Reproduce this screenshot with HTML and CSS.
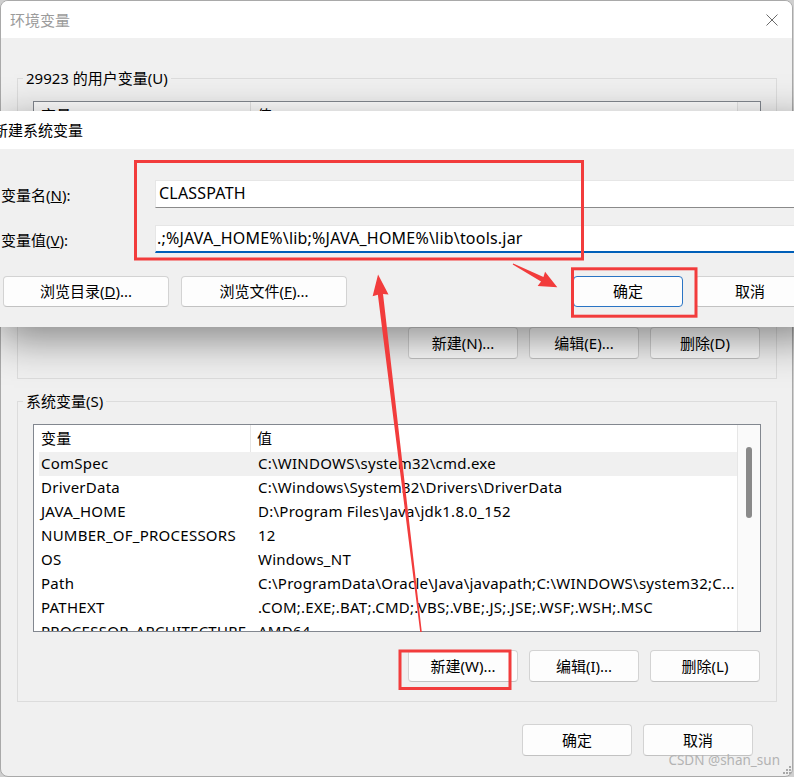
FILE: index.html
```html
<!DOCTYPE html>
<html lang="zh-CN">
<head>
  <meta charset="UTF-8">
  <meta name="viewport" content="width=device-width, initial-scale=1.0">
  <title>环境变量</title>
  <link rel="stylesheet" href="styles.css">
</head>
<body>
  <div class="win">
    <div class="titlebar">
      <span class="title">环境变量</span>
      <svg class="close" width="12" height="12" viewBox="0 0 12 12">
        <path d="M0.5 0.5 L11.5 11.5 M11.5 0.5 L0.5 11.5" stroke="#6b6b6b" stroke-width="1" fill="none"/>
      </svg>
    </div>

    <fieldset class="group group_user">
      <legend>29923 的用户变量(U)</legend>
      <div class="list">
        <div class="list_body">
          <div class="row head"><span class="c1">变量</span><span class="c2">值</span></div>
          <div class="row"><span class="c1">OneDrive</span><span class="c2">C:\Users\29923\OneDrive</span></div>
          <div class="row"><span class="c1">Path</span><span class="c2">C:\Users\29923\AppData\Local\Microsoft\WindowsApps;</span></div>
          <div class="row"><span class="c1">TEMP</span><span class="c2">C:\Users\29923\AppData\Local\Temp</span></div>
          <div class="row"><span class="c1">TMP</span><span class="c2">C:\Users\29923\AppData\Local\Temp</span></div>
        </div>
        <div class="scroll"></div>
      </div>
      <div class="btns">
        <button class="btn">新建(N)...</button>
        <button class="btn">编辑(E)...</button>
        <button class="btn">删除(D)</button>
      </div>
    </fieldset>

    <fieldset class="group group_sys">
      <legend>系统变量(S)</legend>
      <div class="list">
        <div class="list_body">
          <div class="row head"><span class="c1">变量</span><span class="c2">值</span></div>
          <div class="row selected"><span class="c1">ComSpec</span><span class="c2">C:\WINDOWS\system32\cmd.exe</span></div>
          <div class="row"><span class="c1">DriverData</span><span class="c2">C:\Windows\System32\Drivers\DriverData</span></div>
          <div class="row"><span class="c1">JAVA_HOME</span><span class="c2">D:\Program Files\Java\jdk1.8.0_152</span></div>
          <div class="row"><span class="c1">NUMBER_OF_PROCESSORS</span><span class="c2">12</span></div>
          <div class="row"><span class="c1">OS</span><span class="c2">Windows_NT</span></div>
          <div class="row"><span class="c1">Path</span><span class="c2">C:\ProgramData\Oracle\Java\javapath;C:\WINDOWS\system32;C...</span></div>
          <div class="row"><span class="c1">PATHEXT</span><span class="c2">.COM;.EXE;.BAT;.CMD;.VBS;.VBE;.JS;.JSE;.WSF;.WSH;.MSC</span></div>
          <div class="row"><span class="c1">PROCESSOR_ARCHITECTURE</span><span class="c2">AMD64</span></div>
        </div>
        <div class="scroll"><div class="thumb"></div></div>
      </div>
      <div class="btns">
        <button class="btn">新建(W)...</button>
        <button class="btn">编辑(I)...</button>
        <button class="btn">删除(L)</button>
      </div>
    </fieldset>

    <div class="foot">
      <button class="btn">确定</button>
      <button class="btn">取消</button>
    </div>
  </div>

  <!-- 新建系统变量 dialog, on top of the main window -->
  <div class="dlg">
    <div class="dlg_title">新建系统变量</div>
    <div class="form">
      <label class="lbl">变量名(<u>N</u>):</label>
      <div class="field">CLASSPATH</div>
      <label class="lbl">变量值(<u>V</u>):</label>
      <div class="field focus">.;%JAVA_HOME%\lib;%JAVA_HOME%\lib\tools.jar</div>
    </div>
    <div class="dlg_btns">
      <button class="btn wide">浏览目录(<u>D</u>)...</button>
      <button class="btn wide">浏览文件(<u>F</u>)...</button>
      <button class="btn primary">确定</button>
      <button class="btn">取消</button>
    </div>
  </div>

  <!-- red annotations -->
  <svg class="marks" width="794" height="777" viewBox="0 0 794 777">
    <g fill="none" stroke="#f23c3c" stroke-width="3">
      <rect x="135.5" y="161.5" width="447" height="97.5"/>
      <rect x="572.5" y="268.8" width="123.5" height="47.4"/>
      <rect x="400" y="651" width="110" height="37.5"/>
    </g>
    <g fill="#f23c3c">
      <polygon transform="translate(513 264) rotate(27.6)" points="0,-0.6 33,-2.6 32,-8 50,0 32,8 33,2.6 0,0.6"/>
      <polygon transform="translate(421 632) rotate(-96.85)" points="0,-0.8 340,-2.6 339,-8 360,0 339,8 340,2.6 0,0.8"/>
    </g>
  </svg>

  <div class="wm">CSDN @shan_sun</div>
  <svg class="grip" width="10" height="10" viewBox="0 0 10 10">
    <g fill="#a8a8a8">
      <rect x="7" y="1" width="2" height="2"/>
      <rect x="4" y="4" width="2" height="2"/>
      <rect x="7" y="4" width="2" height="2"/>
      <rect x="1" y="7" width="2" height="2"/>
      <rect x="4" y="7" width="2" height="2"/>
      <rect x="7" y="7" width="2" height="2"/>
    </g>
  </svg>
</body>
</html>
```

FILE: styles.css
```css
*{
  margin: 0;
  padding: 0;
  box-sizing: border-box;
}

html, body{
  width: 794px;
  height: 777px;
  overflow: hidden;
}

body{
  position: relative;
  background: #cfcfcf;
  font-family: "Noto Sans", "Noto Sans CJK SC", sans-serif;
  font-size: 15px;
  color: #000;
}

button{
  font: inherit;
  color: inherit;
}

.win{
  width: 793px;
  height: 777px;
  background: #f0f0f0;
  border: 1px solid #a9a9a9;
  border-radius: 8px;
  overflow: hidden;
}

.titlebar{
  height: 37px;
  background: #fff;
  display: flex;
  justify-content: space-between;
  align-items: center;
  padding: 0 14px 0 9px;
}
.titlebar .title{
  color: #9b9b9b;
}

.group{
  width: 760px;
  margin: 30px 0 0 16px;
  border: 1px solid #dcdcdc;
  padding: 13px 15px 19px;
}
.group_sys{
  margin-top: 12px;
}
.group legend{
  margin-left: -10px;
  padding: 0 3px;
  line-height: 20px;
}

.list{
  height: 208px;
  border: 1px solid #82878f;
  background: #fff;
  display: flex;
  overflow: hidden;
}
.list_body{
  flex: 1;
  padding-left: 5px;
}
.row{
  display: flex;
  height: 24px;
  line-height: 23px;
  white-space: nowrap;
  letter-spacing: 0.25px;
}
.row .c1{
  width: 213px;
  padding-left: 2px;
  flex-shrink: 0;
}
.row .c2{
  padding-left: 6px;
}
.row.head{
  height: 27px;
  line-height: 27px;
}
.row.head .c1{
  width: 212px;
  border-right: 1px solid #e5e5e5;
}
.row.selected{
  background: #f0f0f0;
}
.scroll{
  width: 23px;
  border-left: 1px solid #e6e6e6;
  background: #fafafa;
  position: relative;
}
.thumb{
  position: absolute;
  top: 22px;
  left: 8px;
  width: 6px;
  height: 71px;
  border-radius: 3px;
  background: #8a8a8a;
}

.btns{
  display: flex;
  justify-content: flex-end;
  gap: 11px;
  margin-top: 18px;
  padding-right: 1px;
}
.btn{
  width: 110px;
  height: 32px;
  line-height: 30px;
  background: #fdfdfd;
  border: 1px solid #d3d3d3;
  border-bottom-color: #c2c2c2;
  border-radius: 4px;
}

.foot{
  display: flex;
  justify-content: flex-end;
  gap: 11px;
  margin-top: 22px;
  padding-right: 39px;
}

/* dialog */
.dlg{
  position: absolute;
  top: 111px;
  left: 0;
  width: 822px;
  height: 216px;
  background: #f0f0f0;
  box-shadow: 0 12px 40px rgba(0,0,0,0.45);
}
.dlg_title{
  height: 38px;
  line-height: 38px;
  background: #fff;
  text-indent: -7px;
}
.form{
  display: grid;
  grid-template-columns: 154px 1fr;
  row-gap: 17px;
  align-items: center;
  padding: 31px 17px 0 1px;
}
.field{
  height: 28px;
  line-height: 24px;
  background: #fff;
  border: 1px solid #e6e6e6;
  border-bottom-color: #8a8a8a;
  padding-left: 3px;
  white-space: nowrap;
  font-size: 16px;
  letter-spacing: 0.2px;
}
.field.focus{
  border-bottom: 2px solid #005fb8;
  padding-left: 1px;
}
.dlg_btns{
  display: flex;
  gap: 12px;
  margin-top: 23px;
  padding: 0 17px 0 3px;
}
.dlg_btns .btn{
  height: 31px;
  line-height: 29px;
}
.dlg_btns .wide{
  width: 166px;
}
.dlg_btns .primary{
  margin-left: auto;
  border-color: #2a74c4;
}

.marks{
  position: absolute;
  top: 0;
  left: 0;
  pointer-events: none;
}

.wm{
  position: absolute;
  right: 14px;
  bottom: 8px;
  font-size: 13.5px;
  color: #b3b3b3;
}
.grip{
  position: absolute;
  right: 2px;
  bottom: 2px;
}
```
